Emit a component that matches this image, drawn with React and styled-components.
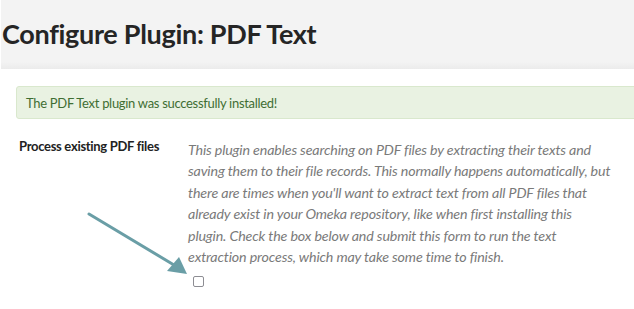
import React from "react";
import styled, { createGlobalStyle } from "styled-components";

const GlobalStyle = createGlobalStyle`
  html, body {
    margin: 0;
    padding: 0;
    background: #fff;
    overflow: hidden;
  }
  body {
    font-family: Lato, "Open Sans", "Liberation Sans", sans-serif;
    color: #222;
  }
`;

const Page = styled.div`
  position: relative;
  width: 634px;
  height: 309px;
  overflow: hidden;
`;

const Header = styled.header`
  height: 69px;
  margin-left: 1px;
  background: linear-gradient(#f3f3f3 0, #f3f3f3 62px, #ebebeb 69px);
  display: flex;
  align-items: center;
  padding-left: 1px;
`;

const Title = styled.h1`
  margin: 0 0 2px;
  font-size: 27px;
  font-weight: 700;
  color: #252525;
  letter-spacing: -0.3px;
`;

const Content = styled.main`
  padding: 17px 0 0 16px;
`;

const Flash = styled.div`
  margin-right: -12px;
  height: 31px;
  display: flex;
  align-items: center;
  padding-left: 9px;
  background: #e9f2e2;
  border: 1px solid #d9e8cd;
  border-radius: 3px;
  color: #3f6e33;
  font-size: 13px;
  letter-spacing: -0.3px;
`;

const Field = styled.div`
  display: grid;
  grid-template-columns: 172px 425px;
  margin-top: 18px;
`;

const Label = styled.label`
  padding: 1px 0 0 3px;
  font-size: 13px;
  font-weight: 700;
  color: #222;
  letter-spacing: -0.3px;
`;

const Inputs = styled.div`
  display: flex;
  flex-direction: column;
  align-items: flex-start;
`;

const Explanation = styled.p`
  margin: 2px 0 0;
  font-size: 14.25px;
  font-style: italic;
  line-height: 21.4px;
  color: #7a7a7a;
  letter-spacing: -0.15px;
`;

const Checkbox = styled.span`
  display: block;
  width: 9px;
  height: 9px;
  margin: 9px 0 0 5px;
  border: 1.5px solid #8d8d93;
  border-radius: 2px;
  background: #fff;
`;

const Arrow = styled.svg`
  position: absolute;
  left: 0;
  top: 0;
  pointer-events: none;
`;

export default function App() {
  return (
    <Page>
      <GlobalStyle />
      <Header>
        <Title>Configure Plugin: PDF Text</Title>
      </Header>
      <Content>
        <Flash>The PDF Text plugin was successfully installed!</Flash>
        <Field>
          <Label>Process existing PDF files</Label>
          <Inputs>
            <Explanation>
              This plugin enables searching on PDF files by extracting their
              texts and saving them to their file records. This normally
              happens automatically, but there are times when you'll want to
              extract text from all PDF files that already exist in your Omeka
              repository, like when first installing this plugin. Check the box
              below and submit this form to run the text extraction process,
              which may take some time to finish.
            </Explanation>
            <Checkbox />
          </Inputs>
        </Field>
      </Content>
      <Arrow width="634" height="309" viewBox="0 0 634 309">
        <line
          x1="89"
          y1="214"
          x2="174"
          y2="265"
          stroke="#6a9ea6"
          strokeWidth="3"
          strokeLinecap="round"
        />
        <polygon points="187,274 167,271 179,257" fill="#6a9ea6" />
      </Arrow>
    </Page>
  );
}
